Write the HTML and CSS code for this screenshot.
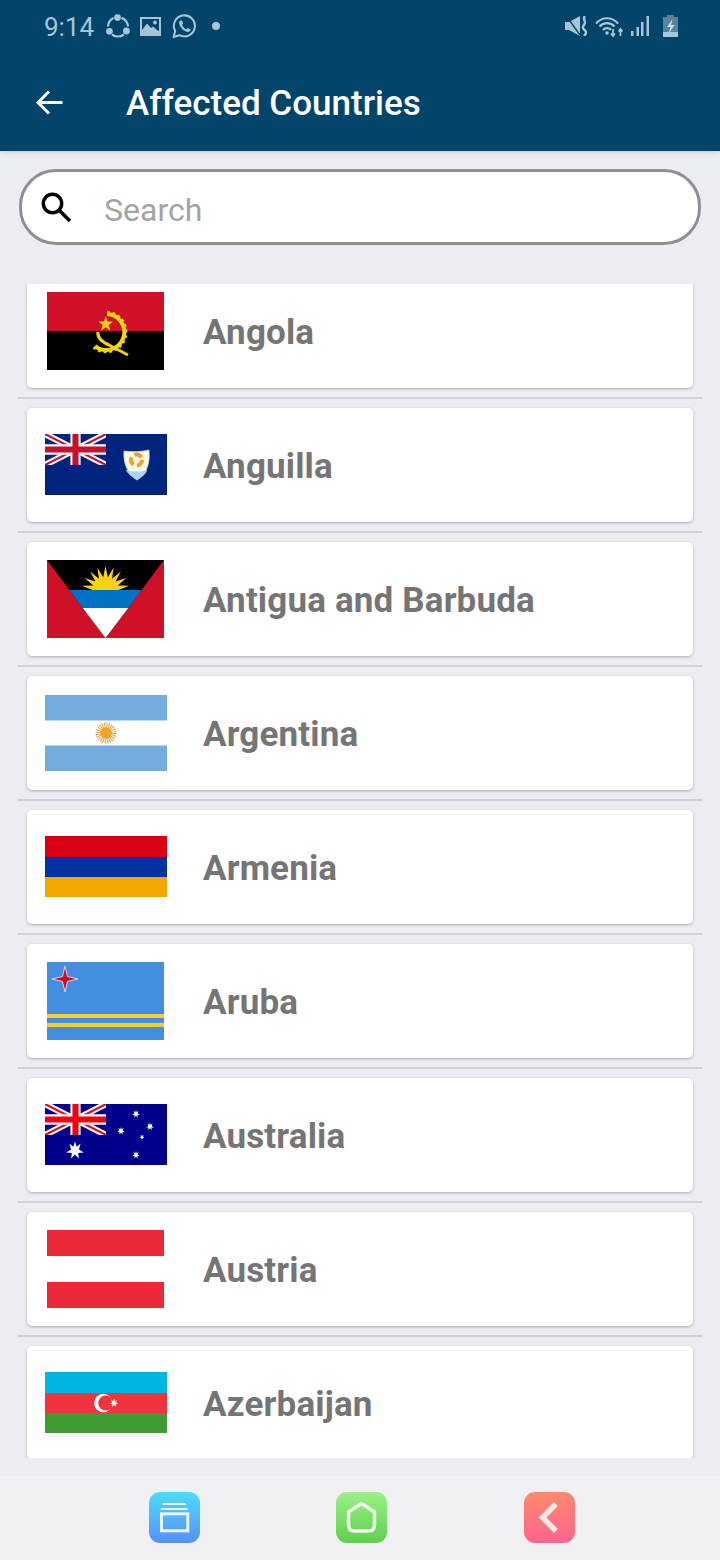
FILE: index.html
```html
<!DOCTYPE html>
<html lang="en">
<head>
<meta charset="utf-8">
<title>Affected Countries</title>
<link rel="stylesheet" href="styles.css">
</head>
<body>
<div class="screen">
  <header class="appbar">
    <div class="status">
      <div class="status-left">
        <span class="time">9:14</span>
        <svg class="si si-share" viewBox="0 0 24 24"><g fill="none" stroke="currentColor" stroke-width="2.200"><path d="M15.500 3.900A10 10 0 0 1 22 12.500"/><path d="M7.500 3.900A10 10 0 0 0 2 12.500"/><path d="M6 20.500A10 10 0 0 0 18 20.500"/></g><g fill="currentColor"><circle cx="11.500" cy="3.600" r="3.400"/><circle cx="3.400" cy="17.300" r="3.400"/><circle cx="20.400" cy="17" r="3.400"/></g></svg>
        <svg class="si si-image" viewBox="0 0 21 19"><rect width="21" height="19" fill="currentColor"/><rect x="2" y="2" width="17" height="12" fill="#03446a"/><circle cx="15" cy="5.500" r="2" fill="currentColor"/><path d="M2 13L7 6.500 11 11l2-1.500 6 5V16H2z" fill="currentColor"/></svg>
        <svg class="si si-wa" viewBox="0 0 24 24"><path d="M1.500 23L3.200 17A10.500 10.500 0 1 1 7.500 21.200Z" fill="none" stroke="currentColor" stroke-width="2" stroke-linejoin="round"/><path d="M8.300 6.500C6.800 7.500 6.500 9.500 8.500 12.800S13.500 18 15.800 18C17.500 18 18.800 16.700 18.500 15.300L15.800 14 14.500 15.300C12.700 14.700 10.800 12.800 10 11L11.200 9.500 10 6.500Z" fill="currentColor"/></svg>
        <span class="dot"></span>
      </div>
      <div class="status-right">
        <svg class="si si-mute" viewBox="0 0 22 20"><path d="M0 6H4L15 0V20L4 14H0Z" fill="currentColor"/><path d="M2 1L15 19" stroke="#03446a" stroke-width="1.300"/><path d="M20 0C17 3 21.500 5 19.500 8S17 12 19.500 14 21 18 19 20" fill="none" stroke="currentColor" stroke-width="2.400"/></svg>
        <svg class="si si-wifi" viewBox="0 0 28 21"><g fill="none" stroke="currentColor" stroke-width="2.200"><path d="M1 7.500C7 .5 17 .5 23 7.500"/><path d="M4.500 10.500C8.500 6 15.500 6 19.500 10.500"/><path d="M8 14C10 11.500 14 11.500 16 14"/></g><circle cx="12" cy="17" r="1.800" fill="currentColor"/><path d="M18 13V20M16 17.500L18 20 20 17.500M25.500 20V13M23.500 15.500L25.500 13 27.500 15.500" fill="none" stroke="currentColor" stroke-width="1.800"/></svg>
        <svg class="si si-signal" viewBox="0 0 18 20"><g fill="currentColor"><rect x="0" y="15" width="2.500" height="5"/><rect x="5.500" y="11" width="2.500" height="9"/><rect x="10" y="6" width="2.500" height="14"/><rect x="15.500" y="0" width="2.500" height="20"/></g></svg>
        <svg class="si si-batt" viewBox="0 0 15 22"><path d="M4 0H11V2H15V22H0V2H4Z" fill="currentColor" opacity=".5"/><rect y="17" width="15" height="5" fill="currentColor"/><path d="M9.500 4L4 12H7.500L5.500 19 11.500 10H8Z" fill="#cfe0ea"/></svg>
      </div>
    </div>
    <div class="toolbar">
      <svg class="back" viewBox="0 0 28 28"><path d="M27.500 13.500H3M14 2.500L3 13.500 14 24.500" fill="none" stroke="#fff" stroke-width="3"/></svg>
      <h1 class="title">Affected Countries</h1>
    </div>
  </header>

  <div class="search">
    <svg class="search-icon" viewBox="0 0 30 30"><circle cx="11.500" cy="11.500" r="9.200" fill="none" stroke="#000" stroke-width="3.400"/><path d="M18.500 18.500L29 29" stroke="#000" stroke-width="3.600"/></svg>
    <span class="search-text">Search</span>
  </div>

  <div class="list">
    <div class="row row-first">
      <div class="card">
        <div class="slot"><svg class="flag f3x2" viewBox="0 0 117 78"><rect width="117" height="39" fill="#ce1126"/><rect y="39" width="117" height="39"/><path d="M60 22A18 18 0 1 1 48 54" fill="none" stroke="#f5d20f" stroke-width="4"/><path d="M60 20A20 20 0 1 1 46 55" fill="none" stroke="#f5d20f" stroke-width="2.500" stroke-dasharray="2.800 2.800"/><path d="M51 40C50 46 55 50 62 53L81 63" fill="none" stroke="#f5d20f" stroke-width="3"/><polygon points="58.700,24 60.500,29.500 66,29.500 61.700,33 63.300,38.500 58.700,35.200 54,38.500 55.700,33 51.400,29.500 57,29.500" fill="#f5d20f"/></svg></div>
        <span class="name">Angola</span>
      </div>
    </div>
    <div class="row">
      <div class="card">
        <div class="slot"><svg class="flag f2x1" viewBox="0 0 122 61"><defs><symbol id="uj" viewBox="0 0 60 30" preserveAspectRatio="none"><path d="M0 0L60 30M60 0L0 30" stroke="#fff" stroke-width="6"/><path d="M0 0L60 30M60 0L0 30" stroke="currentColor" stroke-width="2"/><path d="M30 0V30M0 15H60" stroke="#fff" stroke-width="10"/><path d="M30 0V30M0 15H60" stroke="currentColor" stroke-width="6"/></symbol><symbol id="star7" viewBox="-1 -1 2 2"><polygon points="0,-1 .195,-.405 .623,-.782 .439,-.1 .975,.223 .352,.28 .434,.901 0,.45 -.434,.901 -.352,.28 -.975,.223 -.439,-.1 -.623,-.782 -.195,-.405" fill="#fff"/></symbol></defs><rect width="122" height="61" fill="#00247d"/><use class="uj-red" href="#uj" width="61" height="31"/><path d="M79 17C87 18 96 18 104 16 105 28 103 39 92 46 82 40 78 28 79 17Z" fill="#fbf8e6" stroke="#cfcfc4" stroke-width=".8"/><path d="M80.500 36C88 38 96 38 102.500 36 100 41 96 44 92 46 87 43 83 40 80.500 36Z" fill="#a9d3ee"/><circle cx="91.500" cy="26" r="5.500" fill="none" stroke="#f0a030" stroke-width="4" stroke-dasharray="8 3.500"/></svg></div>
        <span class="name">Anguilla</span>
      </div>
    </div>
    <div class="row">
      <div class="card">
        <div class="slot"><svg class="flag f3x2" viewBox="0 0 117 78"><rect width="117" height="78" fill="#ce1126"/><polygon points="0,0 117,0 58.500,78"/><polygon points="22.500,30 94.500,30 81.200,48 35.800,48" fill="#0072c6"/><polygon points="35.800,48 81.200,48 58.500,78" fill="#fff"/><path d="M45.500 30L34.900 25.800 46.300 25.600 37.700 18 48.500 21.600 43.100 11.600 52 18.700 50.300 7.400 56.200 17.200 58.500 6 60.800 17.200 66.700 7.400 65 18.700 73.900 11.600 68.500 21.600 79.300 18 70.700 25.600 82.100 25.800 71.500 30Z" fill="#fcd116"/></svg></div>
        <span class="name">Antigua and Barbuda</span>
      </div>
    </div>
    <div class="row">
      <div class="card">
        <div class="slot"><svg class="flag farg" viewBox="0 0 122 76"><rect width="122" height="76" fill="#74acdf"/><rect y="25.500" width="122" height="25" fill="#fff"/><circle cx="61" cy="38" r="8" fill="none" stroke="#d9a441" stroke-width="5" stroke-dasharray="1 1.100"/><circle cx="61" cy="38" r="6" fill="#eea52c"/></svg></div>
        <span class="name">Argentina</span>
      </div>
    </div>
    <div class="row">
      <div class="card">
        <div class="slot"><svg class="flag f2x1" viewBox="0 0 122 61"><rect width="122" height="21" fill="#d90012"/><rect y="21" width="122" height="20" fill="#0033a0"/><rect y="41" width="122" height="20" fill="#f2a800"/></svg></div>
        <span class="name">Armenia</span>
      </div>
    </div>
    <div class="row">
      <div class="card">
        <div class="slot"><svg class="flag f3x2" viewBox="0 0 117 78"><rect width="117" height="78" fill="#418fde"/><rect y="52" width="117" height="4" fill="#f7d225"/><rect y="61" width="117" height="4" fill="#f7d225"/><polygon points="18,4 20.500,14.500 31,17 20.500,19.500 18,30 15.500,19.500 5,17 15.500,14.500" fill="#c8102e" stroke="#f3d6dc" stroke-width=".9"/></svg></div>
        <span class="name">Aruba</span>
      </div>
    </div>
    <div class="row">
      <div class="card">
        <div class="slot"><svg class="flag f2x1" viewBox="0 0 122 61"><rect width="122" height="61" fill="#00008b"/><use class="uj-bright" href="#uj" width="61" height="31"/><use href="#star7" x="21" y="37.500" width="18" height="18"/><use href="#star7" x="87" y="6" width="8" height="8"/><use href="#star7" x="101" y="18.500" width="8" height="8"/><use href="#star7" x="72" y="23" width="8" height="8"/><use href="#star7" x="94.500" y="30.500" width="5" height="5"/><use href="#star7" x="87" y="47" width="8" height="8"/></svg></div>
        <span class="name">Australia</span>
      </div>
    </div>
    <div class="row">
      <div class="card">
        <div class="slot"><svg class="flag f3x2" viewBox="0 0 117 78"><rect width="117" height="78" fill="#ed2939"/><rect y="26" width="117" height="26" fill="#fff"/></svg></div>
        <span class="name">Austria</span>
      </div>
    </div>
    <div class="row">
      <div class="card">
        <div class="slot"><svg class="flag f2x1" viewBox="0 0 122 61"><rect width="122" height="21" fill="#00b5e2"/><rect y="21" width="122" height="20" fill="#ef3340"/><rect y="41" width="122" height="20" fill="#3f9c35"/><circle cx="58.300" cy="31" r="9.200" fill="#fff"/><circle cx="60.800" cy="31" r="7.600" fill="#ef3340"/><use href="#star7" x="64.500" y="26.500" width="9" height="9"/></svg></div>
        <span class="name">Azerbaijan</span>
      </div>
    </div>
  </div>

  <nav class="softkeys">
    <svg class="key" viewBox="0 0 51 51"><defs><linearGradient id="gb" x1="0" y1="0" x2="0" y2="1"><stop offset="0" stop-color="#4ddcff"/><stop offset="1" stop-color="#5590f8"/></linearGradient></defs><rect width="51" height="51" rx="11" fill="url(#gb)"/><path d="M13.700 12H37M11.700 17H38.700" stroke="#eef3fb" stroke-width="1.800"/><rect x="12.500" y="21.800" width="26.300" height="17" fill="none" stroke="#eef3fb" stroke-width="3"/></svg>
    <svg class="key" viewBox="0 0 51 51"><defs><linearGradient id="gg" x1="0" y1="0" x2="0" y2="1"><stop offset="0" stop-color="#9bf086"/><stop offset="1" stop-color="#60cf4f"/></linearGradient></defs><rect width="51" height="51" rx="11" fill="url(#gg)"/><path d="M25.500 11.500L38.500 20V33C38.500 37 36.500 39 32.500 39H18.500C14.500 39 12.500 37 12.500 33V20Z" fill="none" stroke="#effbe9" stroke-width="3.500" stroke-linejoin="round"/></svg>
    <svg class="key key-last" viewBox="0 0 51 51"><defs><linearGradient id="gr" x1="0" y1="0" x2="0" y2="1"><stop offset="0" stop-color="#fe8a6c"/><stop offset="1" stop-color="#fe638f"/></linearGradient></defs><rect width="51" height="51" rx="11" fill="url(#gr)"/><path d="M32 12L18.500 25.500 32 39" fill="none" stroke="#fde6e3" stroke-width="5.500"/></svg>
  </nav>
</div>
</body>
</html>
```

FILE: styles.css
```css
* { box-sizing: border-box; }

html, body {
  margin: 0;
  padding: 0;
}

body {
  font-family: Roboto, "Liberation Sans", sans-serif;
  background: #ecedf2;
}

.screen {
  width: 720px;
  height: 1560px;
  display: flex;
  flex-direction: column;
  overflow: hidden;
  background: #ecedf2;
}

.appbar {
  height: 151px;
  flex: none;
  background: #03446a;
  box-shadow: 0 2px 4px rgba(0, 0, 0, .12);
}

.status {
  height: 52px;
  padding: 0 42px 0 44px;
  display: flex;
  align-items: center;
  justify-content: space-between;
  color: #a9c4d4;
}

.status-left,
.status-right {
  display: flex;
  align-items: center;
}

.time {
  font-size: 26px;
  line-height: 30px;
  padding-top: 2px;
  width: 62px;
}

.si { display: block; flex: none; }
.si-share { width: 24px; height: 24px; margin-right: 10px; }
.si-image { width: 21px; height: 19px; margin-right: 11px; }
.si-wa { width: 24px; height: 24px; margin-right: 16px; }
.dot { width: 8px; height: 8px; border-radius: 50%; background: currentColor; }

.si-mute { width: 22px; height: 20px; margin-right: 8px; }
.si-wifi { width: 28px; height: 21px; margin-right: 8px; }
.si-signal { width: 18px; height: 20px; margin-right: 14px; }
.si-batt { width: 15px; height: 22px; }

.toolbar {
  height: 99px;
  padding: 2px 0 0 35px;
  display: flex;
  align-items: center;
}

.back { width: 28px; height: 28px; flex: none; margin-right: 63px; }

.title {
  margin: 0;
  padding-top: 3px;
  color: #fff;
  font-size: 35px;
  font-weight: 500;
  line-height: 40px;
}

.search {
  height: 76px;
  margin: 18px 19px 0 19px;
  flex: none;
  padding-left: 19px;
  display: flex;
  align-items: center;
  background: #fff;
  border: 3.5px solid #8f8f91;
  border-radius: 37px;
}

.search-icon { width: 30px; height: 30px; flex: none; margin-right: 33px; }

.search-text {
  color: #a3a3a3;
  font-size: 32px;
  line-height: 40px;
  padding-top: 5px;
}

.list {
  height: 1174px;
  margin-top: 39px;
  padding: 0 18px;
  flex: none;
  overflow: hidden;
}

.row {
  padding-bottom: 9px;
  margin-bottom: 9px;
  border-bottom: 2px solid #d0d1d6;
}

.row-first { margin-top: -10px; }

.card {
  height: 114px;
  margin: 0 9px;
  padding-left: 18px;
  display: flex;
  align-items: center;
  background: #fff;
  border-radius: 5px;
  box-shadow: 0 1px 3px rgba(0, 0, 0, .28);
}

.slot {
  width: 122px;
  margin-right: 36px;
  flex: none;
  display: flex;
  justify-content: flex-start;
}

.flag { display: block; flex: none; }
.f3x2 { width: 117px; height: 78px; margin-left: 2px; }
.f2x1 { width: 122px; height: 61px; margin-bottom: 1px; }
.farg { width: 122px; height: 76px; }

.uj-red { color: #c8102e; }
.uj-bright { color: #f5000f; }

.name {
  color: #757575;
  font-size: 35px;
  font-weight: 700;
  letter-spacing: .15px;
  line-height: 40px;
  padding-top: 3px;
}

.softkeys {
  margin-top: 18px;
  height: 84px;
  flex: none;
  padding: 16px 0 0 149px;
  display: flex;
  align-items: flex-start;
  gap: 136px;
  background: #f1f1f3;
}

.key { width: 51px; height: 51px; flex: none; display: block; }
.key-last { margin-left: 1px; }
```
